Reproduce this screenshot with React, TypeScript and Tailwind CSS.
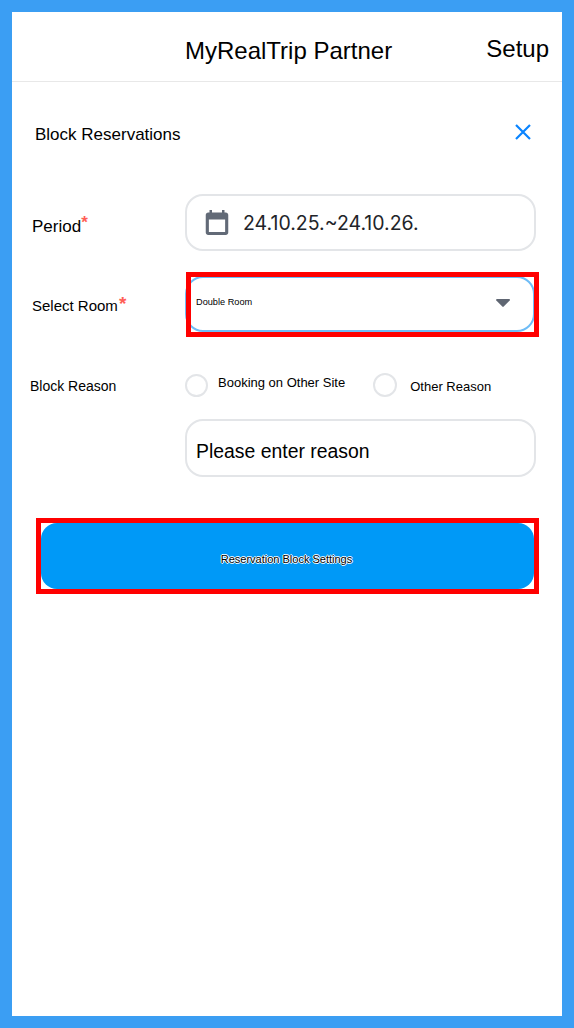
export default function App() {
  return (
    <div className="h-[1028px] w-[574px] border-[12px] border-[#3b9ef3] bg-white font-['Liberation_Sans',sans-serif] text-black">
      {/* Header */}
      <header className="flex h-[70px] items-center border-b border-[#e8e8e8]">
        <h1 className="ml-[173px] mt-[9px] text-[24px] leading-none">MyRealTrip Partner</h1>
        <button className="ml-auto mr-[13px] mt-[5px] text-[24px] leading-none">Setup</button>
      </header>

      <main>
        <div className="mt-[42px] flex items-center justify-between pl-[23px] pr-[31px]">
          <h2 className="translate-y-px text-[17px] leading-5">Block Reservations</h2>
          <svg viewBox="0 0 16 16" className="h-4 w-4 -translate-y-[2px] text-[#0a84ff]" fill="none" stroke="currentColor" strokeWidth="2.2">
            <path d="M1 1l14 14M15 1L1 15" />
          </svg>
        </div>

        {/* Period */}
        <div className="mt-[50px] flex items-center">
          <label className="ml-5 w-[153px] translate-y-[4px] text-[17px] leading-5">
            Period<span className="relative -top-[4px] font-bold text-[#ff5f57]">*</span>
          </label>
          <div className="flex h-[57px] w-[351px] items-center rounded-[18px] border-2 border-[#e3e5e8] pl-[18px]">
            <svg viewBox="3 1 18 20" className="h-[25px] w-[24px] text-[#626a77]" fill="currentColor">
              <path d="M19 3h-1V1h-2v2H8V1H6v2H5c-1.1 0-2 .9-2 2v14c0 1.1.9 2 2 2h14c1.1 0 2-.9 2-2V5c0-1.1-.9-2-2-2zm-.5 15.5h-13V8.5h13v10z" />
            </svg>
            <span className="ml-[14px] translate-y-px font-['Inter',sans-serif] text-[19.5px] leading-none text-[#222429]">24.10.25.~24.10.26.</span>
          </div>
        </div>

        {/* Room */}
        <div className="mt-[21px] flex items-center">
          <label className="ml-5 w-[154px] translate-y-px text-[15px] leading-5">
            Select Room<span className="relative -top-[1px] ml-[1px] text-[19px] font-bold leading-none text-[#ff5f57]">*</span>
          </label>
          <div className="relative h-[65px] w-[353px]">
            <div className="-ml-px mt-1 flex h-[56px] w-[350px] items-center justify-between rounded-[18px] border-2 border-[#6ebcf6] pl-[9px] pr-[23px]">
              <span className="-translate-y-[1px] text-[9.2px] leading-none">Double Room</span>
              <svg viewBox="0 0 14 8" className="h-2 w-[14px] -translate-y-[1px] text-[#5f6672]" fill="currentColor">
                <path d="M1 0h12c.8 0 1.2.9.7 1.5L7.7 7.6c-.4.4-1 .4-1.4 0L.3 1.5C-.2.9.2 0 1 0z" />
              </svg>
            </div>
            {/* annotation frame over the select */}
            <div className="absolute inset-0 border-[5px] border-[#ff0000]" />
          </div>
        </div>

        {/* Reason */}
        <div className="mt-[36px] flex items-center">
          <label className="ml-[18px] w-[155px] translate-y-px text-[14px] leading-5">Block Reason</label>
          <span className="h-[23px] w-[23px] rounded-full border-2 border-[#e3e5e8]" />
          <span className="ml-[10px] -translate-y-[2px] text-[13px] leading-5">Booking on Other Site</span>
          <span className="ml-[28px] h-[24px] w-[24px] rounded-full border-2 border-[#e3e5e8]" />
          <span className="ml-[13px] translate-y-[2px] text-[13px] leading-5">Other Reason</span>
        </div>

        <div className="ml-[173px] mt-[22px] flex h-[58px] w-[351px] items-center rounded-[18px] border-2 border-[#e3e5e8] pl-[9px] pt-[8px] text-[19.4px] leading-none">
          Please enter reason
        </div>

        {/* Submit */}
        <div className="ml-6 mt-[41px] h-[76px] w-[503px] border-[5px] border-[#ff0000]">
          <button className="flex h-[66px] w-full items-center justify-center rounded-[16px] bg-[#0099f7] pr-[2px] pt-[6px] text-[11px] leading-none text-black [text-shadow:1px_0_0_#fff,-1px_0_0_#fff,0_1px_0_#fff,0_-1px_0_#fff]">
            Reservation Block Settings
          </button>
        </div>
      </main>
    </div>
  );
}
